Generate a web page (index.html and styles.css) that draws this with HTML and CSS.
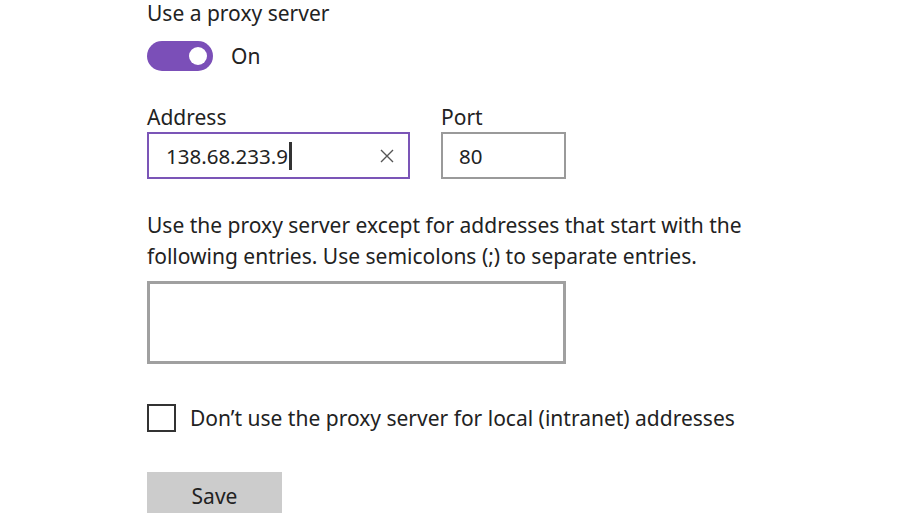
FILE: index.html
```html
<!DOCTYPE html>
<html lang="en">
<head>
    <meta charset="UTF-8">
    <title>Proxy</title>
    <link rel="stylesheet" href="styles.css">
</head>
<body>
    <div class="page">
        <div class="heading">Use a proxy server</div>
        <div class="toggle-row">
            <span class="toggle"><span class="knob"></span></span>
            <span class="toggle-label">On</span>
        </div>
        <div class="fields">
            <div class="field">
                <label>Address</label>
                <div class="input address">
                    <span class="value">138.68.233.9</span><span class="caret"></span>
                    <svg class="clear" width="14" height="14" viewBox="0 0 14 14">
                        <path d="M1 1 L13 13 M13 1 L1 13" stroke="#555" stroke-width="1.4" fill="none"/>
                    </svg>
                </div>
            </div>
            <div class="field">
                <label>Port</label>
                <div class="input port"><span class="value">80</span></div>
            </div>
        </div>
        <p class="note">Use the proxy server except for addresses that start with the following entries. Use semicolons (;) to separate entries.</p>
        <div class="textbox"></div>
        <div class="check-row">
            <span class="check"></span>
            <span>Don’t use the proxy server for local (intranet) addresses</span>
        </div>
        <button class="save">Save</button>
    </div>
</body>
</html>
```

FILE: styles.css
```css
body {
    margin: 0;
    background: #fff;
    color: #222;
    font-family: "Noto Sans", sans-serif;
    font-size: 21px;
    overflow: hidden;
}
.page {
    padding-left: 147px;
    width: 640px;
}
.heading {
    line-height: 28px;
    margin-top: -1px;
}
.toggle-row {
    display: flex;
    align-items: center;
    gap: 18px;
    margin-top: 14px;
    height: 30px;
}
.toggle {
    width: 66px;
    height: 30px;
    border-radius: 15px;
    background: #7b4fb8;
    position: relative;
}
.knob {
    position: absolute;
    right: 6px;
    top: 6px;
    width: 18px;
    height: 18px;
    border-radius: 50%;
    background: #fff;
}
.fields {
    display: flex;
    gap: 31px;
    margin-top: 32px;
}
.field label {
    display: block;
    line-height: 29px;
}
.input {
    box-sizing: border-box;
    height: 47px;
    border: 2px solid #9a9a9a;
    display: flex;
    align-items: center;
    padding-left: 17px;
    font-size: 20.5px;
}
.address {
    width: 263px;
    border-color: #7b55b7;
}
.port {
    width: 125px;
    padding-left: 16px;
}
.caret {
    width: 3px;
    height: 28px;
    background: #333;
    margin-left: 1px;
}
.clear {
    margin-left: auto;
    margin-right: 14px;
}
.note {
    margin: 31px 0 0;
    line-height: 31px;
    width: 620px;
}
.textbox {
    box-sizing: border-box;
    width: 419px;
    height: 83px;
    border: 3px solid #a0a0a0;
    margin-top: 9px;
}
.check-row {
    display: flex;
    align-items: center;
    gap: 14px;
    margin-top: 40px;
    height: 28px;
}
.check {
    box-sizing: border-box;
    width: 29px;
    height: 28px;
    border: 2px solid #333;
}
.save {
    display: block;
    margin-top: 40px;
    width: 135px;
    height: 48px;
    border: none;
    background: #cccccc;
    color: #222;
    font-family: inherit;
    font-size: 21px;
    padding: 0;
}
```
